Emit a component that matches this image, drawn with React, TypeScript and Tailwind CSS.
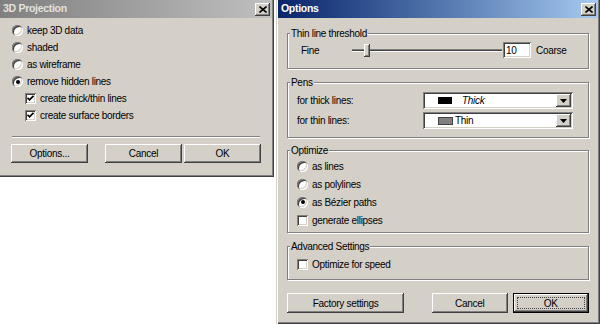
import { ReactNode } from "react";

const raised =
  "shadow-[inset_-1px_-1px_0_#404040,inset_1px_1px_0_#fff,inset_-2px_-2px_0_#808080,inset_2px_2px_0_#d4d0c8]";
const sunken =
  "shadow-[inset_1px_1px_0_#808080,inset_-1px_-1px_0_#fff,inset_2px_2px_0_#404040,inset_-2px_-2px_0_#d4d0c8]";

function CloseBtn() {
  return (
    <div className={`w-[15px] h-[13px] bg-[#d4d0c8] flex items-center justify-center ${raised}`}>
      <svg width="8" height="7" viewBox="0 0 8 7">
        <path d="M0.5 0.5 L7.5 6.5 M7.5 0.5 L0.5 6.5" stroke="#000" strokeWidth="1.6" />
      </svg>
    </div>
  );
}

function TitleBar({ title, active }: { title: string; active?: boolean }) {
  return (
    <div
      className={`h-[18px] flex items-center justify-between pl-[3px] pr-[2px] ${
        active ? "bg-gradient-to-r from-[#0a246a] to-[#a6caf0] text-white" : "bg-gradient-to-r from-[#808080] to-[#c0c0c0] text-[#e4e2dc]"
      }`}
    >
      <span className="font-bold text-[10.5px] tracking-[-0.3px]">{title}</span>
      <CloseBtn />
    </div>
  );
}

function Radio({ label, checked }: { label: string; checked?: boolean }) {
  return (
    <div className="flex items-center gap-[4px] h-full">
      <span className="w-[11px] h-[11px] rounded-full bg-white shadow-[inset_1px_1px_0_#808080,inset_-1px_-1px_0_#fff,inset_2px_2px_0_#404040,inset_-2px_-2px_0_#d4d0c8] flex items-center justify-center">
        {checked && <span className="w-[4px] h-[4px] rounded-full bg-black" />}
      </span>
      <span>{label}</span>
    </div>
  );
}

function Check({ label, checked }: { label: string; checked?: boolean }) {
  return (
    <div className="flex items-center gap-[4px] h-full">
      <span className={`w-[11px] h-[11px] bg-white flex items-center justify-center ${sunken}`}>
        {checked && (
          <svg width="7" height="7" viewBox="0 0 7 7">
            <path d="M0.5 2.8 L2.5 4.8 L6.5 0.8" fill="none" stroke="#000" strokeWidth="1.7" />
          </svg>
        )}
      </span>
      <span>{label}</span>
    </div>
  );
}

function Button({ children, w, def }: { children: ReactNode; w: string; def?: boolean }) {
  if (def) {
    return (
      <div className={`${w} h-[20px] border border-black`}>
        <div className={`h-full flex items-center justify-center p-[3px] ${raised}`}>
          <div className="w-full h-full border border-dotted border-[#404040] flex items-center justify-center">
            {children}
          </div>
        </div>
      </div>
    );
  }
  return <div className={`${w} flex items-center justify-center ${raised}`}>{children}</div>;
}

function Group({ title, h, children }: { title: string; h: string; children: ReactNode }) {
  return (
    <fieldset className={`${h} border border-[#808080] shadow-[1px_1px_0_#fff,inset_1px_1px_0_#fff] px-0`}>
      <legend className="ml-[2px] px-[1px] leading-[13px] bg-[#d4d0c8]">{title}</legend>
      {children}
    </fieldset>
  );
}

function Combo({ children }: { children: ReactNode }) {
  return (
    <div className={`w-[150px] h-[17px] bg-white flex items-center pl-[15px] pr-[2px] ${sunken}`}>
      <div className="flex-1 flex items-center gap-[2px]">{children}</div>
      <div className={`w-[15px] h-[13px] bg-[#d4d0c8] flex items-center justify-center ${raised}`}>
        <svg width="7" height="4" viewBox="0 0 7 4">
          <path d="M0 0 H7 L3.5 4 Z" fill="#000" />
        </svg>
      </div>
    </div>
  );
}

export default function App() {
  return (
    <div className="w-[600px] h-[324px] bg-white flex items-start gap-[2px] overflow-hidden font-['Liberation_Sans',Arial,sans-serif] text-[10px] tracking-[-0.3px] text-black">
      {/* 3D Projection */}
      <div className="w-[274px] h-[177px] bg-[#d4d0c8] flex flex-col pr-[2px] shadow-[inset_-1px_-1px_0_#404040,inset_-2px_-2px_0_#808080]">
        <TitleBar title="3D Projection" />
        <div className="flex flex-col pl-[12px] pt-[4px]">
          <div className="h-[17px]"><Radio label="keep 3D data" /></div>
          <div className="h-[17px]"><Radio label="shaded" /></div>
          <div className="h-[17px]"><Radio label="as wireframe" /></div>
          <div className="h-[17px]"><Radio label="remove hidden lines" checked /></div>
          <div className="flex flex-col pl-[13px]">
            <div className="h-[17px]"><Check label="create thick/thin lines" checked /></div>
            <div className="h-[17px]"><Check label="create surface borders" checked /></div>
          </div>
        </div>
        <div className="mx-[12px] mt-[12px] border-t border-t-[#808080] border-b border-b-white" />
        <div className="flex pl-[11px] mt-[6px] h-[19px]">
          <Button w="w-[77px]">Options...</Button>
          <div className="w-[17px]" />
          <Button w="w-[77px]">Cancel</Button>
          <div className="w-[2px]" />
          <Button w="w-[77px]">OK</Button>
        </div>
      </div>

      {/* Options */}
      <div className="w-[324px] h-[324px] bg-[#d4d0c8] flex flex-col shadow-[inset_1px_0_0_#d4d0c8,inset_2px_0_0_#fff,inset_-1px_-1px_0_#404040,inset_-2px_-2px_0_#808080]">
        <div className="ml-[2px] mr-[2px]">
          <TitleBar title="Options" active />
        </div>
        <div className="flex flex-col pl-[11px] pr-[11px]">
          <div className="mt-[9px]">
            <Group title="Thin line threshold" h="h-[42px]">
              <div className="flex items-center h-[16px] mt-[2px] pl-[13px]">
                <span className="w-[51px]">Fine</span>
                <div className="w-[12px] h-[3px] border-t border-t-[#808080] bg-[#404040] border-b border-b-white" />
                <div className={`w-[6px] h-[13px] bg-[#d4d0c8] ${raised}`} />
                <div className="w-[132px] h-[3px] border-t border-t-[#808080] bg-[#404040] border-b border-b-white" />
                <div className={`ml-[1px] w-[28px] h-[16px] bg-white flex items-center pl-[3px] ${sunken}`}>10</div>
                <span className="ml-[5px]">Coarse</span>
              </div>
            </Group>
          </div>
          <div className="mt-[7px]">
            <Group title="Pens" h="h-[62px]">
              <div className="flex flex-col gap-[3px] pt-[3px] pl-[9px]">
                <div className="flex items-center h-[17px]">
                  <span className="w-[126px]">for thick lines:</span>
                  <Combo>
                    <span className="w-[14px] h-[7px] bg-black" />
                    <span className="ml-[8px] italic">Thick</span>
                  </Combo>
                </div>
                <div className="flex items-center h-[17px]">
                  <span className="w-[126px]">for thin lines:</span>
                  <Combo>
                    <span className="w-[15px] h-[8px] bg-[#808080] border border-[#404040]" />
                    <span>Thin</span>
                  </Combo>
                </div>
              </div>
            </Group>
          </div>
          <div className="mt-[6px]">
            <Group title="Optimize" h="h-[89px]">
              <div className="flex flex-col pl-[9px]">
                <div className="h-[18px]"><Radio label="as lines" /></div>
                <div className="h-[18px]"><Radio label="as polylines" /></div>
                <div className="h-[18px]"><Radio label="as Bézier paths" checked /></div>
                <div className="h-[18px]"><Check label="generate ellipses" /></div>
              </div>
            </Group>
          </div>
          <div className="mt-[7px]">
            <Group title="Advanced Settings" h="h-[40px]">
              <div className="flex flex-col pl-[9px] pt-[2px]">
                <div className="h-[18px]"><Check label="Optimize for speed" /></div>
              </div>
            </Group>
          </div>
          <div className="flex mt-[13px] h-[20px]">
            <Button w="w-[118px]">Factory settings</Button>
            <div className="w-[28px]" />
            <Button w="w-[76px]">Cancel</Button>
            <div className="w-[5px]" />
            <Button w="w-[77px]" def>OK</Button>
          </div>
        </div>
      </div>
    </div>
  );
}
